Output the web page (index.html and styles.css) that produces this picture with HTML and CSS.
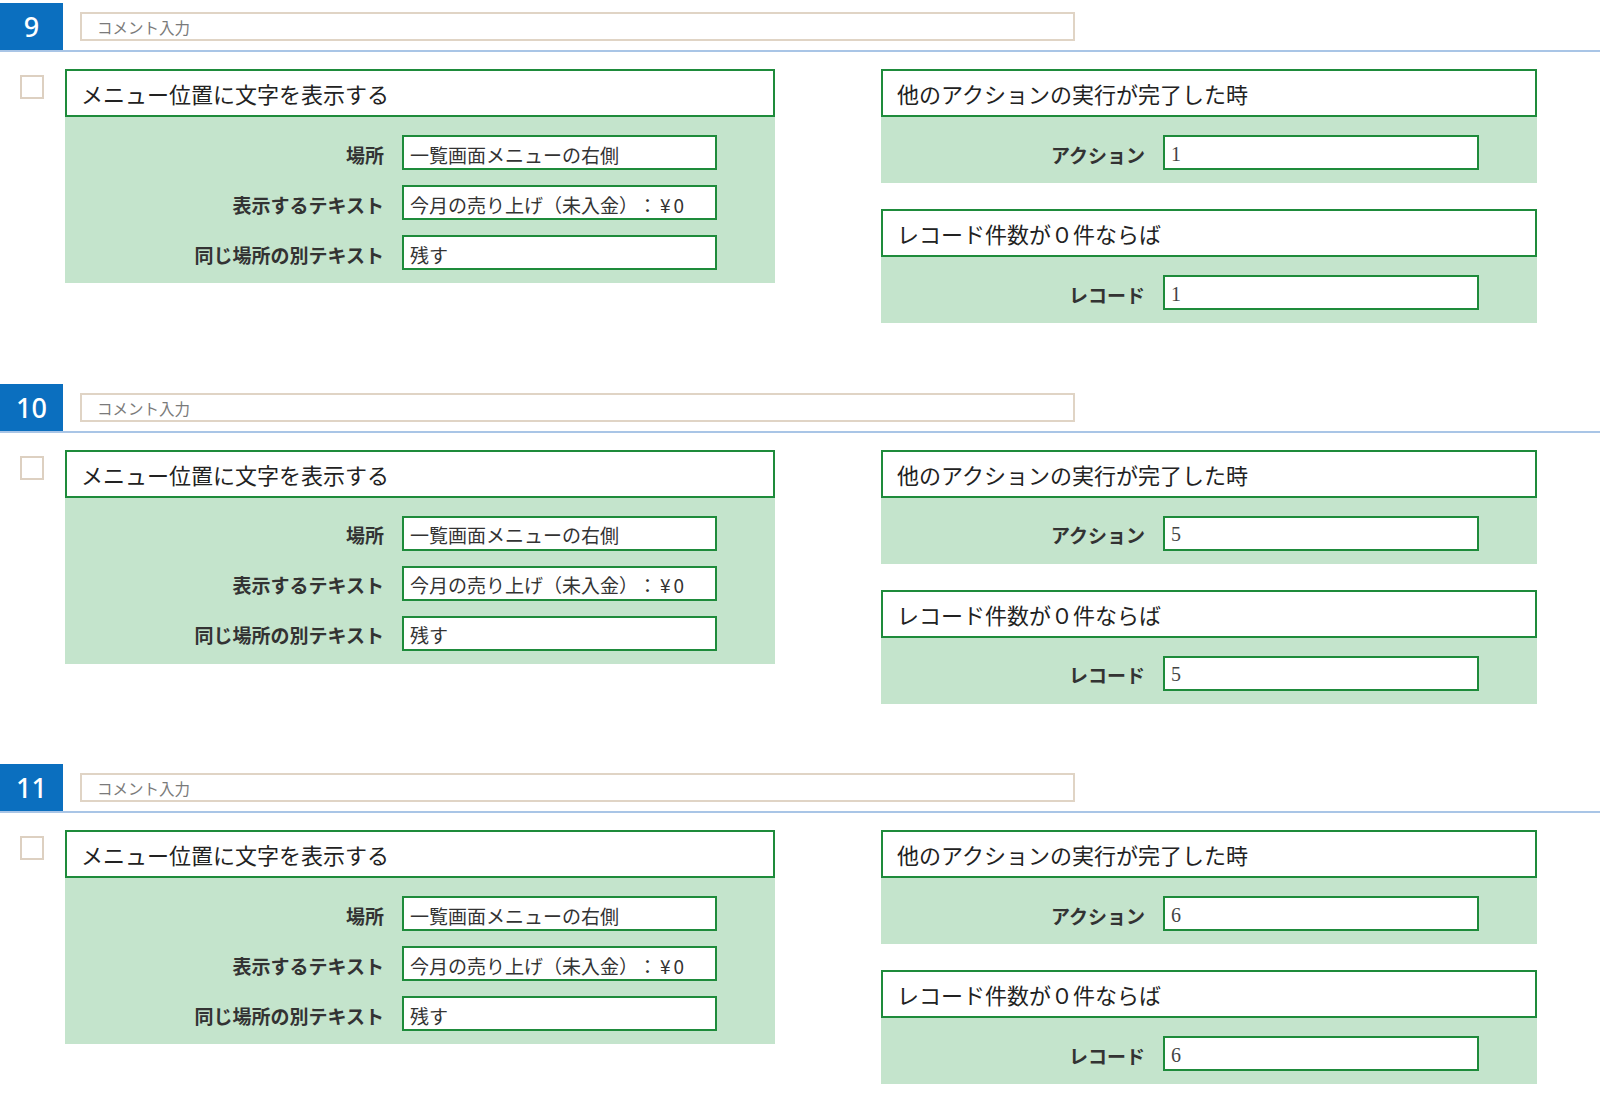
FILE: index.html
```html
<!DOCTYPE html>
<html lang="ja">
<head>
<meta charset="utf-8">
<title>アクション設定</title>
<link rel="stylesheet" href="styles.css">
</head>
<body>
<div class="page">

  <div class="section">
    <div class="sec-head">
      <div class="num">9</div>
      <div class="comment">コメント入力</div>
    </div>
    <div class="sec-body">
      <div class="check"></div>
      <div class="card card-left">
        <div class="card-title">メニュー位置に文字を表示する</div>
        <div class="card-body">
          <div class="row"><div class="label">場所</div><div class="field">一覧画面メニューの右側</div></div>
          <div class="row"><div class="label">表示するテキスト</div><div class="field">今月の売り上げ（未入金）：<span class="amount">¥0</span></div></div>
          <div class="row"><div class="label">同じ場所の別テキスト</div><div class="field">残す</div></div>
        </div>
      </div>
      <div class="right-col">
        <div class="card">
          <div class="card-title">他のアクションの実行が完了した時</div>
          <div class="card-body">
            <div class="row"><div class="label">アクション</div><div class="field num-field">1</div></div>
          </div>
        </div>
        <div class="card">
          <div class="card-title">レコード件数が０件ならば</div>
          <div class="card-body">
            <div class="row"><div class="label">レコード</div><div class="field num-field">1</div></div>
          </div>
        </div>
      </div>
    </div>
  </div>

  <div class="section">
    <div class="sec-head">
      <div class="num">10</div>
      <div class="comment">コメント入力</div>
    </div>
    <div class="sec-body">
      <div class="check"></div>
      <div class="card card-left">
        <div class="card-title">メニュー位置に文字を表示する</div>
        <div class="card-body">
          <div class="row"><div class="label">場所</div><div class="field">一覧画面メニューの右側</div></div>
          <div class="row"><div class="label">表示するテキスト</div><div class="field">今月の売り上げ（未入金）：<span class="amount">¥0</span></div></div>
          <div class="row"><div class="label">同じ場所の別テキスト</div><div class="field">残す</div></div>
        </div>
      </div>
      <div class="right-col">
        <div class="card">
          <div class="card-title">他のアクションの実行が完了した時</div>
          <div class="card-body">
            <div class="row"><div class="label">アクション</div><div class="field num-field">5</div></div>
          </div>
        </div>
        <div class="card">
          <div class="card-title">レコード件数が０件ならば</div>
          <div class="card-body">
            <div class="row"><div class="label">レコード</div><div class="field num-field">5</div></div>
          </div>
        </div>
      </div>
    </div>
  </div>

  <div class="section">
    <div class="sec-head">
      <div class="num">11</div>
      <div class="comment">コメント入力</div>
    </div>
    <div class="sec-body">
      <div class="check"></div>
      <div class="card card-left">
        <div class="card-title">メニュー位置に文字を表示する</div>
        <div class="card-body">
          <div class="row"><div class="label">場所</div><div class="field">一覧画面メニューの右側</div></div>
          <div class="row"><div class="label">表示するテキスト</div><div class="field">今月の売り上げ（未入金）：<span class="amount">¥0</span></div></div>
          <div class="row"><div class="label">同じ場所の別テキスト</div><div class="field">残す</div></div>
        </div>
      </div>
      <div class="right-col">
        <div class="card">
          <div class="card-title">他のアクションの実行が完了した時</div>
          <div class="card-body">
            <div class="row"><div class="label">アクション</div><div class="field num-field">6</div></div>
          </div>
        </div>
        <div class="card">
          <div class="card-title">レコード件数が０件ならば</div>
          <div class="card-body">
            <div class="row"><div class="label">レコード</div><div class="field num-field">6</div></div>
          </div>
        </div>
      </div>
    </div>
  </div>

</div>
</body>
</html>
```
FILE: styles.css
```css
* { box-sizing: border-box; }

html, body {
  margin: 0;
  padding: 0;
  background: #ffffff;
}

body {
  font-family: "Noto Sans CJK JP", "Noto Sans", sans-serif;
  color: #222;
  text-spacing-trim: space-all;
}

.page {
  padding-top: 3px;
  width: 1600px;
}

.section {
  height: 380.5px;
}

.sec-head {
  display: flex;
  align-items: center;
  height: 49px;
  border-bottom: 2px solid #a9c5e6;
}

.num {
  width: 63px;
  height: 47px;
  background: #0b6fbf;
  color: #ffffff;
  font-family: "Noto Sans", "Open Sans", sans-serif;
  font-size: 27px;
  font-weight: 500;
  display: flex;
  align-items: center;
  justify-content: center;
  align-self: flex-start;
}

.comment {
  margin-left: 17px;
  width: 995px;
  height: 29px;
  border: 2px solid #e0d4c5;
  padding-left: 15px;
  padding-top: 1px;
  font-size: 15.5px;
  color: #7a7a7a;
  display: flex;
  align-items: center;
}

.sec-body {
  display: flex;
  align-items: flex-start;
  margin-top: 17px;
  padding-left: 20px;
}

.check {
  width: 24px;
  height: 24px;
  border: 2px solid #ddd0c1;
  background: #fff;
  margin-top: 6px;
  margin-right: 21px;
  flex: none;
}

.card-left {
  width: 710px;
  flex: none;
}

.right-col {
  margin-left: 106px;
  width: 656px;
  display: flex;
  flex-direction: column;
  gap: 26px;
}

.card-title {
  height: 48px;
  border: 2px solid #1e8b3b;
  background: #ffffff;
  padding-left: 14px;
  font-size: 22px;
  color: #222;
  display: flex;
  align-items: center;
}

.card-body {
  background: #c4e4cc;
  padding: 18px 0 13px;
  display: flex;
  flex-direction: column;
  gap: 15px;
}

.row {
  display: flex;
  align-items: center;
  gap: 18px;
}

.label {
  width: 319px;
  text-align: right;
  font-size: 19px;
  font-weight: bold;
  color: #333;
  padding-top: 3px;
}

.right-col .label {
  width: 264px;
}

.field {
  width: 315px;
  height: 35px;
  border: 2px solid #1e8b3b;
  background: #ffffff;
  padding-left: 6px;
  padding-top: 3px;
  font-size: 19px;
  color: #333;
  display: flex;
  align-items: center;
  white-space: pre;
}

.amount {
  margin-left: 3px;
  letter-spacing: 3px;
}

.right-col .field {
  width: 316px;
}

.num-field {
  font-family: "Liberation Serif", serif;
  font-size: 20px;
  color: #444;
}
```
